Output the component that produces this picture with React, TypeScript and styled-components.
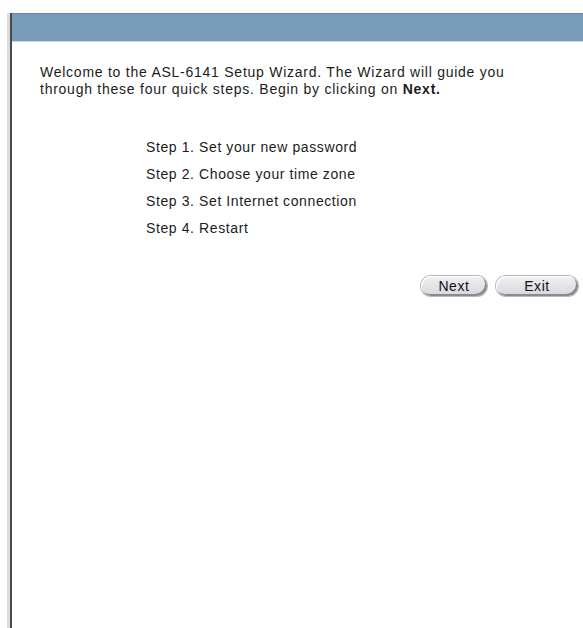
import React from "react";
import styled, { createGlobalStyle } from "styled-components";

const GlobalStyle = createGlobalStyle`
    html, body {
        margin: 0;
        padding: 0;
        background: #ffffff;
    }
    body {
        font-family: "Liberation Sans", Arial, sans-serif;
        color: #1c1c1c;
    }
`;

const Page = styled.div`
    width: 583px;
    height: 628px;
    padding-top: 13px;
    padding-left: 7px;
    box-sizing: border-box;
    overflow: hidden;
`;

const Frame = styled.div`
    height: 100%;
    border-left: 3px solid #dcdcdc;
    display: flex;
    flex-direction: column;
`;

const Panel = styled.div`
    flex: 1;
    border-left: 2px solid #4a4a4a;
    display: flex;
    flex-direction: column;
`;

const TitleBar = styled.div`
    height: 27px;
    background: #7a9cbb;
    border-top: 1px solid #6785a6;
    border-bottom: 1px solid #c9d8e6;
`;

const Content = styled.div`
    padding: 22px 0 0 28px;
`;

const Intro = styled.p`
    margin: 0;
    font-size: 14px;
    line-height: 17px;
    letter-spacing: 0.75px;
`;

const StepList = styled.ul`
    list-style: none;
    margin: 36px 0 0 106px;
    padding: 0;
`;

const Step = styled.li`
    font-size: 14px;
    line-height: 27px;
    height: 27px;
    letter-spacing: 0.6px;
`;

const ButtonRow = styled.div`
    display: flex;
    justify-content: flex-end;
    gap: 9px;
    margin-top: 34px;
    padding-right: 5px;
`;

const PillButton = styled.button<{ $width: number }>`
    width: ${(p) => p.$width}px;
    height: 20px;
    border: none;
    border-radius: 10px;
    background: linear-gradient(#f2f2f4, #d6d6dc);
    box-shadow: inset -2px -2px 0 #8a8a90, inset 1px 1px 0 #ffffff, 0 0 0 1px #b8b8be;
    font-family: "Liberation Sans", Arial, sans-serif;
    font-size: 14px;
    line-height: 20px;
    letter-spacing: 0.6px;
    color: #111111;
    padding: 0;
    cursor: pointer;
`;

export default function App() {
    return (
        <Page>
            <GlobalStyle />
            <Frame>
                <Panel>
                    <TitleBar />
                    <Content>
                        <Intro>
                            Welcome to the ASL-6141 Setup Wizard. The Wizard will guide you
                            <br />
                            through these four quick steps. Begin by clicking on <b>Next.</b>
                        </Intro>
                        <StepList>
                            <Step>Step 1. Set your new password</Step>
                            <Step>Step 2. Choose your time zone</Step>
                            <Step>Step 3. Set Internet connection</Step>
                            <Step>Step 4. Restart</Step>
                        </StepList>
                        <ButtonRow>
                            <PillButton $width={66}>Next</PillButton>
                            <PillButton $width={82}>Exit</PillButton>
                        </ButtonRow>
                    </Content>
                </Panel>
            </Frame>
        </Page>
    );
}
